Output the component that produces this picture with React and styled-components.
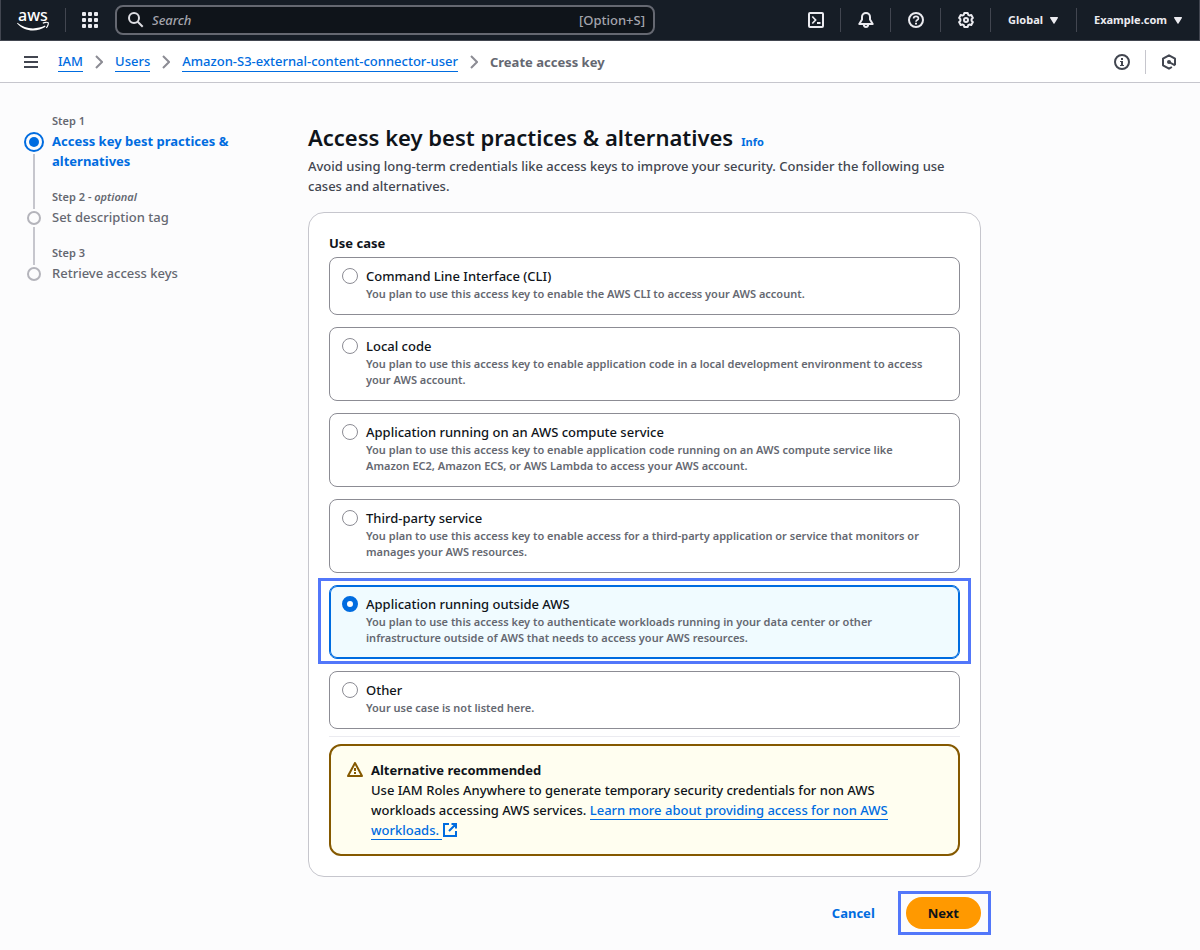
import React, { useState } from "react";
import styled, { createGlobalStyle, css } from "styled-components";

const useCases = [
  {
    id: "cli",
    title: "Command Line Interface (CLI)",
    text: "You plan to use this access key to enable the AWS CLI to access your AWS account.",
  },
  {
    id: "local",
    title: "Local code",
    text: "You plan to use this access key to enable application code in a local development environment to access your AWS account.",
  },
  {
    id: "compute",
    title: "Application running on an AWS compute service",
    text: "You plan to use this access key to enable application code running on an AWS compute service like Amazon EC2, Amazon ECS, or AWS Lambda to access your AWS account.",
  },
  {
    id: "third-party",
    title: "Third-party service",
    text: "You plan to use this access key to enable access for a third-party application or service that monitors or manages your AWS resources.",
  },
  {
    id: "outside",
    title: "Application running outside AWS",
    text: "You plan to use this access key to authenticate workloads running in your data center or other infrastructure outside of AWS that needs to access your AWS resources.",
    marked: true,
  },
  {
    id: "other",
    title: "Other",
    text: "Your use case is not listed here.",
  },
];

const steps = [
  { label: "Step 1", title: "Access key best practices & alternatives" },
  { label: "Step 2", optional: true, title: "Set description tag" },
  { label: "Step 3", title: "Retrieve access keys" },
];

export default function App() {
  return (
    <>
      <GlobalStyle />
      <TopNav />
      <Breadcrumbs />
      <Layout>
        <Steps />
        <AccessKeyForm />
      </Layout>
    </>
  );
}

function TopNav() {
  return (
    <_TopNav>
      <LogoLink href="#" aria-label="AWS home">
        <AwsLogo />
      </LogoLink>
      <NavRule />
      <IconButton aria-label="Services">
        <GridIcon />
      </IconButton>
      <SearchBox>
        <SearchIcon />
        <SearchInput type="search" placeholder="Search" aria-label="Search" />
        <Shortcut>[Option+S]</Shortcut>
      </SearchBox>
      <NavTools>
        <ToolButton aria-label="CloudShell">
          <ShellIcon />
        </ToolButton>
        <ToolButton aria-label="Notifications">
          <BellIcon />
        </ToolButton>
        <ToolButton aria-label="Help">
          <HelpIcon />
        </ToolButton>
        <ToolButton aria-label="Settings">
          <GearIcon />
        </ToolButton>
        <MenuButton>
          Global <CaretIcon />
        </MenuButton>
        <MenuButton>
          Example.com <CaretIcon />
        </MenuButton>
      </NavTools>
    </_TopNav>
  );
}

function Breadcrumbs() {
  return (
    <_Breadcrumbs>
      <BarButton aria-label="Open navigation">
        <MenuIcon />
      </BarButton>
      <Crumbs>
        <li>
          <Link href="#">IAM</Link>
          <ChevronIcon />
        </li>
        <li>
          <Link href="#">Users</Link>
          <ChevronIcon />
        </li>
        <li>
          <Link href="#">Amazon-S3-external-content-connector-user</Link>
          <ChevronIcon />
        </li>
        <li>
          <Current>Create access key</Current>
        </li>
      </Crumbs>
      <BarTools>
        <BarButton aria-label="Info">
          <InfoIcon />
        </BarButton>
        <BarButton aria-label="Shortcuts">
          <HexIcon />
        </BarButton>
      </BarTools>
    </_Breadcrumbs>
  );
}

function Steps() {
  return (
    <StepList>
      {steps.map((step, i) => (
        <Step key={step.label}>
          <Track>
            <Lead $active={i === 0} $hidden={i === 0} />
            <Dot $active={i === 0} />
            {i < steps.length - 1 && <Tail />}
          </Track>
          <StepText>
            <StepLabel>
              {step.label}
              {step.optional && (
                <>
                  {" "}
                  - <i>optional</i>
                </>
              )}
            </StepLabel>
            <StepTitle $active={i === 0}>{step.title}</StepTitle>
          </StepText>
        </Step>
      ))}
    </StepList>
  );
}

function AccessKeyForm() {
  const [selected, setSelected] = useState("outside");

  return (
    <main>
      <Heading>
        <h1>Access key best practices &amp; alternatives</h1>
        <InfoLink href="#">Info</InfoLink>
      </Heading>
      <Intro>
        Avoid using long-term credentials like access keys to improve your
        security. Consider the following use cases and alternatives.
      </Intro>
      <Panel>
        <UseCases>
          <legend>Use case</legend>
          {useCases.map((item) => {
            const tile = (
              <Tile key={item.id} $checked={selected === item.id}>
                <Radio
                  type="radio"
                  name="use-case"
                  checked={selected === item.id}
                  onChange={() => setSelected(item.id)}
                />
                <span>
                  <TileTitle>{item.title}</TileTitle>
                  <TileText>{item.text}</TileText>
                </span>
              </Tile>
            );
            return item.marked ? (
              <TileMark key={item.id}>{tile}</TileMark>
            ) : (
              tile
            );
          })}
        </UseCases>
        <Divider />
        <Alert>
          <WarningIcon />
          <div>
            <strong>Alternative recommended</strong>
            <p>
              Use IAM Roles Anywhere to generate temporary security credentials
              for non AWS workloads accessing AWS services.{" "}
              <Link href="#">
                Learn more about providing access for non AWS workloads.{" "}
              </Link>
              <ExternalIcon />
            </p>
          </div>
        </Alert>
      </Panel>
      <Actions>
        <CancelButton type="button">Cancel</CancelButton>
        <NextMark>
          <NextButton type="button">Next</NextButton>
        </NextMark>
      </Actions>
    </main>
  );
}

/* icons */

const line = { fill: "none", stroke: "currentColor", strokeWidth: 2 };

const AwsLogo = () => (
  <svg width="32" height="34" viewBox="0 0 32 34" fill="none">
    <LogoText x="1" y="18">
      aws
    </LogoText>
    <path
      d="M.4 19.700C5 23.500 10.400 25.400 16 25.400c4.200 0 8.500-1 12-2.800l.5 1.100C25 26.100 20.600 27.500 16 27.500 9.800 27.500 4.100 24.900.1 20.400z"
      fill="#fff"
    />
    <path
      d="M25.800 20.300c2-1.300 4.700-1.200 5.300-.6.5.7-.1 3.300-1.800 5.100"
      stroke="#fff"
      strokeWidth="1.200"
    />
  </svg>
);

const GridIcon = () => (
  <svg width="16" height="16" viewBox="0 0 16 16" fill="#ebebf0">
    {[0, 6, 12].map((y) =>
      [0, 6, 12].map((x) => (
        <rect key={`${x}-${y}`} x={x} y={y} width="4" height="4" rx="1" />
      ))
    )}
  </svg>
);

const SearchIcon = () => (
  <svg width="16" height="16" viewBox="0 0 16 16" {...line}>
    <circle cx="6" cy="6" r="5" />
    <path d="m9.700 9.700 5 5" />
  </svg>
);

const ShellIcon = () => (
  <svg width="16" height="16" viewBox="0 0 16 16" {...line}>
    <rect x="1" y="1" width="14" height="14" rx="1" />
    <path d="m4.300 4.500 3.300 3.500-3.300 3.500" strokeWidth="1.700" />
    <path d="M9 11h3.500" />
  </svg>
);

const BellIcon = () => (
  <svg width="16" height="16" viewBox="0 0 16 16" {...line}>
    <path
      d="M8 1C5.600 1 4 2.800 4 5v2.600L1.300 12h13.400L12 7.600V5c0-2.200-1.600-4-4-4z"
      strokeLinejoin="round"
    />
    <path d="M5.800 12.300c0 1.600.9 2.700 2.200 2.700s2.200-1.100 2.200-2.700" />
  </svg>
);

const HelpIcon = () => (
  <svg width="16" height="16" viewBox="0 0 16 16" {...line}>
    <circle cx="8" cy="8" r="7" />
    <path
      d="M5.600 6.600C5.600 5.200 6.600 4.300 8 4.300s2.400.9 2.400 2.100c0 1.600-2.400 1.700-2.400 3.400"
      strokeWidth="1.700"
    />
    <path d="M8 10.700v1.700" />
  </svg>
);

const GearIcon = () => (
  <svg width="16" height="16" viewBox="0 0 16 16" {...line}>
    <path
      d="M6.300 1h3.400l.5 1.800 1.200.7 1.900-.5 1.600 2.900L13.600 7.300v1.400l1.300 1.400-1.600 2.900-1.900-.5-1.200.7L9.700 15H6.300l-.5-1.800-1.200-.7-1.900.5-1.600-2.900 1.300-1.400V7.300L1.100 5.900 2.700 3l1.900.5 1.200-.7z"
      strokeLinejoin="round"
    />
    <circle cx="8" cy="8" r="2" />
  </svg>
);

const CaretIcon = () => (
  <svg width="8" height="7" viewBox="0 0 8 7" fill="currentColor">
    <path d="M.6 0h6.800c.5 0 .7.500.5.900L4.500 6.500c-.2.400-.8.400-1 0L.1.900C-.1.500.1 0 .6 0z" />
  </svg>
);

const MenuIcon = () => (
  <svg width="14" height="12" viewBox="0 0 14 12" {...line}>
    <path d="M0 1h14M0 6h14M0 11h14" />
  </svg>
);

const ChevronIcon = () => (
  <svg width="8" height="14" viewBox="0 0 8 14" {...line} stroke="#8c8c94">
    <path d="m1 1 6 6-6 6" />
  </svg>
);

const InfoIcon = () => (
  <svg width="16" height="16" viewBox="0 0 16 16" {...line}>
    <circle cx="8" cy="8" r="7" />
    <path
      d="M7 4h2v2H7zM6 7h3v4h1v1H6v-1h1V8H6z"
      fill="currentColor"
      stroke="none"
    />
  </svg>
);

const HexIcon = () => (
  <svg width="16" height="16" viewBox="0 0 16 16" {...line}>
    <path
      d="M14 11.200V4.700L8 1.300 2 4.700v6.600l6 3.400 2.900-1.700"
      strokeLinejoin="round"
    />
    <circle cx="8" cy="8" r="2" fill="currentColor" stroke="none" />
    <path d="m8 8 6 3.400" />
  </svg>
);

const WarningIcon = () => (
  <svg width="16" height="20" viewBox="0 0 16 20" {...line} stroke="#855900">
    <path d="M8 3 1 16h14z" strokeLinejoin="round" />
    <path d="M8 8v3M8 12v2" />
  </svg>
);

const ExternalIcon = () => (
  <LinkSvg width="16" height="16" viewBox="0 0 16 16" {...line}>
    <path d="M7 2H2v12h12V9M9.500 2H14v4.500M14 2 7 9" />
  </LinkSvg>
);

/* styles */

const GlobalStyle = createGlobalStyle`
  * {
    box-sizing: border-box;
  }

  body {
    margin: 0;
    background: #fcfcfd;
    color: #0f141a;
    font-family: "Noto Sans", "Open Sans", sans-serif;
    font-size: 13px;
    font-weight: 500;
    line-height: 20px;
  }

  button,
  input {
    font: inherit;
  }

  button {
    cursor: pointer;
  }

  svg {
    flex: none;
  }
`;

const plainButton = css`
  display: flex;
  align-items: center;
  padding: 0;
  border: 0;
  background: none;
  color: inherit;
`;

const _TopNav = styled.header`
  display: flex;
  align-items: center;
  height: 41px;
  padding: 0 17px 0 16px;
  background: #161d26;
  border: 1px solid #424650;
  border-top: 0;
  color: #ebebf0;
`;

const LogoLink = styled.a`
  display: flex;
`;

const LogoText = styled.text`
  font-size: 16px;
  font-weight: 500;
  fill: #fff;
`;

const LinkSvg = styled.svg`
  color: #006ce0;
  vertical-align: -3px;
`;

const NavRule = styled.span`
  width: 1px;
  height: 24px;
  margin: 0 16px;
  background: #424650;
`;

const IconButton = styled.button`
  ${plainButton}
`;

const SearchBox = styled.label`
  display: flex;
  align-items: center;
  flex: 0 1 540px;
  height: 30px;
  margin-left: 17px;
  padding: 0 8px 0 11px;
  background: #0f141a;
  border: 2px solid #656871;
  border-radius: 8px;
  color: #dedee3;
`;

const SearchInput = styled.input`
  flex: 1;
  min-width: 0;
  padding: 0 8px;
  border: 0;
  outline: 0;
  background: none;
  color: #fff;

  &::placeholder {
    color: #a4a4ad;
    font-style: italic;
    opacity: 1;
  }
`;

const Shortcut = styled.span`
  color: #a4a4ad;
`;

const NavTools = styled.div`
  display: flex;
  align-items: center;
  margin-left: auto;

  && > * + * {
    border-left: 1px solid #424650;
  }
`;

const ToolButton = styled.button`
  ${plainButton}
  height: 24px;
  padding: 0 16px 0 17px;
`;

const MenuButton = styled.button`
  ${plainButton}
  gap: 7px;
  height: 24px;
  padding: 0 18px 0 17px;
  font-size: 11px;
  font-weight: 700;

  &:last-child {
    padding-right: 0;
  }
`;

const _Breadcrumbs = styled.nav`
  display: flex;
  align-items: center;
  height: 42px;
  padding: 0 23px 0 24px;
  background: #fff;
  border-bottom: 1px solid #c6c6cd;
  color: #424650;
`;

const BarButton = styled.button`
  ${plainButton}
`;

const Crumbs = styled.ol`
  display: flex;
  flex: 1;
  margin: 0;
  padding: 0 0 0 20px;
  list-style: none;

  li {
    display: flex;
    align-items: center;
  }

  svg {
    margin: 0 12px;
  }
`;

const Link = styled.a`
  color: #006ce0;
  border-bottom: 1px solid #006ce0;
  text-decoration: none;
`;

const Current = styled.span`
  color: #656871;
  font-weight: 700;
`;

const BarTools = styled.div`
  display: flex;

  ${BarButton} {
    height: 24px;
  }

  ${BarButton} + ${BarButton} {
    margin-left: 15px;
    padding-left: 15px;
    border-left: 1px solid #c6c6cd;
  }
`;

const Layout = styled.div`
  display: grid;
  grid-template-columns: 260px minmax(0, 1fr);
  gap: 24px;
  padding: 30px 219px 20px 24px;
`;

const StepList = styled.ol`
  margin: 0;
  padding: 0;
  list-style: none;
`;

const Step = styled.li`
  display: flex;
  gap: 8px;
`;

const Track = styled.div`
  display: flex;
  flex-direction: column;
  align-items: center;
  gap: 2px;
  width: 20px;
`;

const Lead = styled.span`
  width: 2px;
  height: ${({ $active }) => ($active ? 17 : 20)}px;
  background: ${({ $hidden }) => ($hidden ? "transparent" : "#c6c6cd")};
`;

const Tail = styled.span`
  flex: 1;
  width: 2px;
  background: #c6c6cd;
`;

const Dot = styled.span`
  width: 14px;
  height: 14px;
  border: 2px solid #b4b4bb;
  border-radius: 50%;

  ${({ $active }) =>
    $active &&
    css`
      width: 20px;
      height: 20px;
      padding: 3px;
      border-color: #006ce0;
      background: #006ce0 content-box;
    `}
`;

const StepText = styled.div`
  flex: 1;
  padding-bottom: 18px;
  color: #656871;
`;

const StepLabel = styled.div`
  margin-bottom: 2px;
  font-size: 11px;
  font-weight: 600;
  line-height: 16px;
`;

const StepTitle = styled.div`
  max-width: 200px;

  ${({ $active }) =>
    $active &&
    css`
      color: #006ce0;
      font-weight: 700;
    `}
`;

const Heading = styled.div`
  display: flex;
  align-items: baseline;
  gap: 8px;
  margin-top: 9px;

  h1 {
    margin: 0;
    font-size: 22px;
    font-weight: 600;
    line-height: 30px;
  }
`;

const InfoLink = styled.a`
  color: #006ce0;
  font-size: 11px;
  font-weight: 700;
  text-decoration: none;
`;

const Intro = styled.p`
  margin: 4px 0 16px;
  color: #424650;
`;

const Panel = styled.section`
  padding: 20px;
  background: #fff;
  border: 1px solid #c6c6cd;
  border-radius: 16px;
`;

const UseCases = styled.fieldset`
  display: grid;
  gap: 12px;
  min-width: 0;
  margin: 0;
  padding: 0;
  border: 0;

  legend {
    padding: 0 0 4px;
    font-weight: 700;
  }
`;

const Tile = styled.label`
  display: flex;
  gap: 8px;
  padding: 8px 20px 12px 12px;
  background: ${({ $checked }) => ($checked ? "#f0fbff" : "#fff")};
  border: 1px solid ${({ $checked }) => ($checked ? "#006ce0" : "#8c8c94")};
  border-radius: 8px;
  box-shadow: ${({ $checked }) =>
    $checked ? "inset 0 0 0 1px #006ce0" : "none"};
`;

const TileMark = styled.div`
  margin: -7px -11px -5px;
  padding: 4px 8px 2px;
  border: 3px solid #5277fa;
`;

const Radio = styled.input`
  appearance: none;
  flex: none;
  width: 16px;
  height: 16px;
  margin: 2px 0;
  background: #fff;
  border: 1px solid #8c8c94;
  border-radius: 50%;

  &:checked {
    border: 5px solid #006ce0;
  }
`;

const TileTitle = styled.span`
  display: block;
`;

const TileText = styled.span`
  display: block;
  color: #656871;
  font-size: 11px;
  font-weight: 600;
  line-height: 16px;
`;

const Divider = styled.hr`
  margin: 7px 0;
  border: 0;
  border-top: 1px solid #ebebf0;
`;

const Alert = styled.div`
  display: flex;
  gap: 8px;
  padding: 14px 16px;
  background: #fffef0;
  border: 2px solid #855900;
  border-radius: 12px;

  strong {
    display: block;
    font-weight: 700;
  }

  p {
    margin: 0;
  }
`;

const Actions = styled.div`
  display: flex;
  align-items: center;
  justify-content: flex-end;
  margin-top: 20px;
`;

const CancelButton = styled.button`
  ${plainButton}
  height: 32px;
  padding: 0 31px 0 20px;
  color: #006ce0;
  font-weight: 700;
`;

const NextMark = styled.div`
  margin: -6px -10px -6px -8px;
  padding: 3px 7px 3px 5px;
  border: 3px solid #5277fa;
`;

const NextButton = styled.button`
  height: 32px;
  padding: 0 22px;
  background: #ff9900;
  border: 0;
  border-radius: 16px;
  color: #0f141a;
  font-weight: 700;
`;
